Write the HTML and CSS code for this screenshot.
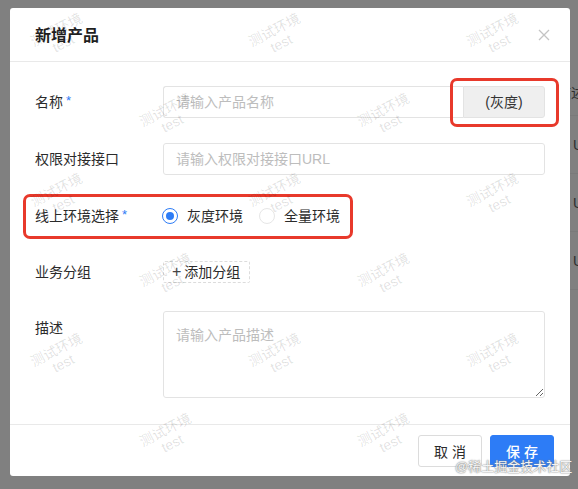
FILE: index.html
```html
<!DOCTYPE html>
<html lang="zh-CN">
<head>
<meta charset="utf-8">
<title>新增产品</title>
<link rel="stylesheet" href="styles.css">
</head>
<body>
<div class="page">
  <div class="page-col">
    <div class="page-row page-head">描述</div>
    <div class="page-row page-cell">URL</div>
    <div class="page-row page-cell">URL</div>
    <div class="page-row page-cell">URL</div>
  </div>
</div>

<div class="modal">
  <div class="modal-header">
    <div class="modal-title">新增产品</div>
    <svg class="close" width="12" height="12" viewBox="0 0 12 12"><path d="M1 1L11 11M11 1L1 11" stroke="#c4c4c4" stroke-width="1.3" fill="none"/></svg>
  </div>
  <div class="modal-body">
    <div class="row">
      <div class="label">名称<span class="req">*</span></div>
      <div class="control">
        <div class="input-group">
          <div class="input grow">请输入产品名称</div>
          <div class="addon">(灰度)</div>
        </div>
      </div>
    </div>
    <div class="row">
      <div class="label">权限对接接口</div>
      <div class="control">
        <div class="input">请输入权限对接接口URL</div>
      </div>
    </div>
    <div class="row">
      <div class="label">线上环境选择<span class="req">*</span></div>
      <div class="control radios">
        <label class="radio"><span class="dot checked"></span><span>灰度环境</span></label>
        <label class="radio"><span class="dot"></span><span>全量环境</span></label>
      </div>
    </div>
    <div class="row row-short">
      <div class="label">业务分组</div>
      <div class="control">
        <span class="add-btn"><span class="plus">+</span>添加分组</span>
      </div>
    </div>
    <div class="row row-top">
      <div class="label">描述</div>
      <div class="control">
        <textarea class="textarea" placeholder="请输入产品描述"></textarea>
      </div>
    </div>
  </div>
  <div class="modal-footer">
    <button class="btn">取 消</button>
    <button class="btn btn-primary">保 存</button>
  </div>

  <div class="mark mark-1"></div>
  <div class="mark mark-2"></div>

  <div class="watermarks">
    <div class="wm-row wm-a"><div class="wm"><span>测试环境</span><span>test</span></div><div class="wm"><span>测试环境</span><span>test</span></div><div class="wm"><span>测试环境</span><span>test</span></div></div>
    <div class="wm-row wm-b"><div class="wm"><span>测试环境</span><span>test</span></div><div class="wm"><span>测试环境</span><span>test</span></div></div>
    <div class="wm-row wm-a"><div class="wm"><span>测试环境</span><span>test</span></div><div class="wm"><span>测试环境</span><span>test</span></div><div class="wm"><span>测试环境</span><span>test</span></div></div>
    <div class="wm-row wm-b"><div class="wm"><span>测试环境</span><span>test</span></div><div class="wm"><span>测试环境</span><span>test</span></div></div>
    <div class="wm-row wm-a"><div class="wm"><span>测试环境</span><span>test</span></div><div class="wm"><span>测试环境</span><span>test</span></div><div class="wm"><span>测试环境</span><span>test</span></div></div>
    <div class="wm-row wm-b"><div class="wm"><span>测试环境</span><span>test</span></div><div class="wm"><span>测试环境</span><span>test</span></div></div>
  </div>
</div>

<div class="credit">@稀土掘金技术社区</div>
</body>
</html>
```

FILE: styles.css
```css
* { box-sizing: border-box; }
html, body { margin: 0; padding: 0; }
body {
  width: 578px;
  height: 489px;
  overflow: hidden;
  background: #808080;
  font-family: "Liberation Sans", "Noto Sans CJK SC", sans-serif;
  font-size: 14px;
  color: #333;
  position: relative;
}

/* page behind the mask */
.page { padding: 70px 0 0 557px; }
.page-col { width: 40px; }
.page-row {
  height: 58px;
  line-height: 58px;
  border-bottom: 1px solid #7a7a7a;
  color: #2e2e2e;
  white-space: nowrap;
}
.page-head { height: 46px; line-height: 46px; }
.page-cell { padding-left: 16px; }

/* modal */
.modal {
  position: absolute;
  left: 10px;
  top: 8px;
  width: 560px;
  height: 468px;
  background: #fff;
  border-radius: 3px;
  overflow: hidden;
}
.modal-header {
  height: 54px;
  padding: 0 20px 0 25px;
  border-bottom: 1px solid #e9e9e9;
  display: flex;
  align-items: center;
  justify-content: space-between;
}
.modal-title {
  font-size: 16px;
  font-weight: 600;
  color: #1f1f1f;
  line-height: 22px;
  margin-top: 3px;
}
.close { display: block; margin-top: 0; }

.modal-body {
  padding: 24px 25px 26px 25px;
  display: flex;
  flex-direction: column;
  gap: 25px;
}
.row { display: flex; align-items: center; height: 32px; }
.row-short { height: 29px; }
.row-top { align-items: flex-start; height: 87px; }
.label {
  width: 128px;
  flex: none;
  line-height: 32px;
  color: #2b2b2b;
  white-space: nowrap;
}
.row-top .label { line-height: 34px; }
.req {
  color: #2d7cf6;
  margin-left: 3px;
  font-size: 13px;
  position: relative;
  top: -2px;
}
.control { flex: 1; display: flex; align-items: center; }

.input {
  width: 100%;
  height: 32px;
  border: 1px solid #e3e3e3;
  border-radius: 3px;
  padding: 0 12px;
  line-height: 30px;
  color: #bdbdbd;
  white-space: nowrap;
}
.input-group { display: flex; width: 100%; }
.input.grow { flex: 1; border-radius: 3px 0 0 3px; border-right: none; }
.addon {
  width: 82px;
  height: 32px;
  line-height: 30px;
  text-align: center;
  background: #efefef;
  border: 1px solid #e3e3e3;
  border-radius: 0 3px 3px 0;
  color: #333;
}

.radios { gap: 16px; margin-left: -1px; }
.radio { display: flex; align-items: center; gap: 9px; line-height: 22px; color: #2b2b2b; }
.dot {
  width: 16px;
  height: 16px;
  border-radius: 50%;
  border: 1px solid #e6e6e6;
  display: flex;
  align-items: center;
  justify-content: center;
}
.dot.checked { border-color: #2d7cf6; }
.dot.checked::after {
  content: "";
  width: 8px;
  height: 8px;
  border-radius: 50%;
  background: #2d7cf6;
}

.add-btn {
  display: flex;
  align-items: center;
  height: 22px;
  padding: 0 9px 0 8px;
  border: 1px dashed #dcdcdc;
  border-radius: 2px;
  color: #2b2b2b;
  line-height: 20px;
}
.plus { font-size: 16px; margin-right: 3px; color: #444; }

.textarea {
  width: 100%;
  height: 87px;
  border: 1px solid #e3e3e3;
  border-radius: 3px;
  padding: 12px 12px;
  font-family: "Liberation Sans", "Noto Sans CJK SC", sans-serif;
  font-size: 14px;
  line-height: 22px;
  color: #333;
  outline: none;
  display: block;
}
.textarea::placeholder { color: #bdbdbd; }

.modal-footer {
  border-top: 1px solid #e9e9e9;
  padding: 10px 16px 9px;
  display: flex;
  justify-content: flex-end;
  gap: 8px;
}
.btn {
  width: 64px;
  height: 32px;
  border: 1px solid #dcdcdc;
  border-radius: 3px;
  background: #fff;
  font-family: "Liberation Sans", "Noto Sans CJK SC", sans-serif;
  font-size: 14px;
  color: #2b2b2b;
  padding: 0;
}
.btn-primary { background: #2d7cf6; border-color: #2d7cf6; color: #fff; font-weight: 500; }

/* annotation boxes */
.mark {
  position: absolute;
  border: 3px solid #e8392b;
  border-radius: 7px;
  pointer-events: none;
}
.mark-1 { left: 440px; top: 70px; width: 109px; height: 49px; }
.mark-2 { left: 13px; top: 186px; width: 330px; height: 45px; }

/* watermark */
.watermarks {
  position: absolute;
  left: 0;
  top: -11px;
  pointer-events: none;
  display: flex;
  flex-direction: column;
}
.wm-row { display: flex; height: 80px; }
.wm-a { margin-left: -59px; }
.wm-b { margin-left: 50px; }
.wm {
  width: 218px;
  height: 80px;
  flex: none;
  display: flex;
  flex-direction: column;
  align-items: center;
  justify-content: center;
  transform: rotate(-27deg);
  color: rgba(0, 0, 0, 0.12);
  font-size: 14px;
  line-height: 15px;
}
.wm span { display: block; }

.credit {
  position: absolute;
  left: 455px;
  top: 458px;
  font-size: 13px;
  line-height: 18px;
  color: #f4f4f4;
  text-shadow: 0 0 1px #7a7a7a, 0 0 2px #8a8a8a;
  white-space: nowrap;
}
```
